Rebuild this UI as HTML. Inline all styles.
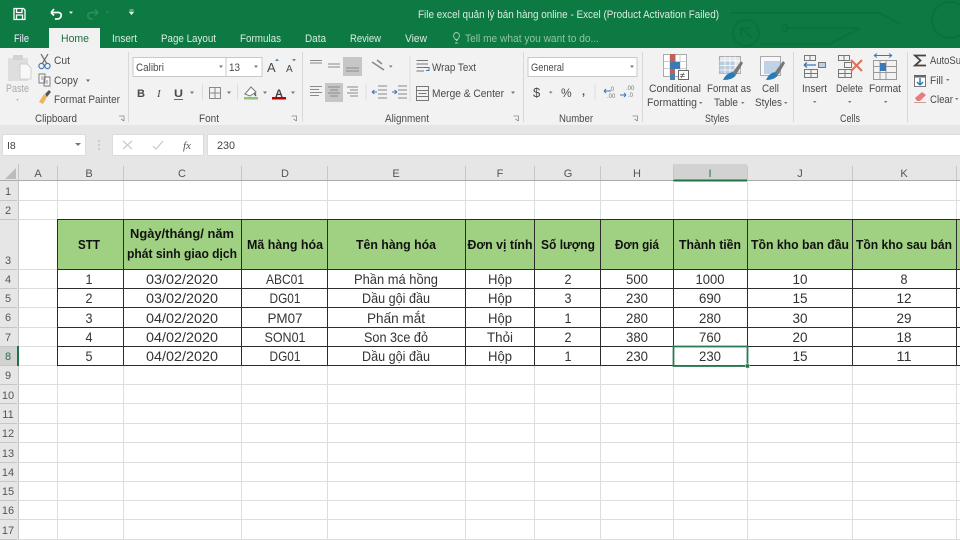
<!DOCTYPE html>
<html><head><meta charset="utf-8"><title>Excel</title>
<style>
html,body{margin:0;padding:0;background:#fff;width:960px;height:540px;overflow:hidden}
svg{display:block;font-family:"Liberation Sans","Noto Sans CJK SC",sans-serif;filter:blur(.3px)}
.r text{fill:#4a4a4a;font-size:11px}
.t text{fill:#dcebe2;font-size:11px}
.h text{fill:#555;font-size:11px;text-anchor:middle}
.b text{fill:#111;font-size:13px;font-weight:bold;text-anchor:middle}
.d text{fill:#333;font-size:14px;text-anchor:middle}
.ic{fill:none;stroke:#777;stroke-width:1}
</style></head><body>
<svg width="960" height="540" viewBox="0 0 960 540" xmlns="http://www.w3.org/2000/svg">
<rect width="960" height="540" fill="#fff"/>
<!-- title bar -->
<rect width="960" height="48" fill="#0d7a43"/>
<g fill="none" stroke="#0b723e" stroke-width="2">
<path d="M730 13H880L900 24"/><path d="M785 28H860L830 44H760"/><circle cx="746" cy="33" r="13"/><path d="M741 36V28H750M741 28L752 38"/><circle cx="785" cy="28" r="3"/><circle cx="950" cy="20" r="18"/>
</g>
<!-- QAT -->
<g fill="none" stroke="#fff" stroke-width="1.300"><path d="M14 8.500H23.500L25 10V19.500H14Z"/><path d="M16.500 9V12.500H22V9"/><path d="M16.500 19V15H22.500V19"/></g>
<path d="M51 12.500H59Q62 13.500 61 16.500T55 19M51 12.500L54 9M51 12.500L54 15.500" fill="none" stroke="#fff" stroke-width="1.700"/>
<path d="M69 11.500h4l-2 2.500z" fill="#e8f0eb"/>
<path d="M98 12.500H91Q87 13.500 88 16.500T93 19M98 12.500L95 9.500M98 12.500L95 15.500" fill="none" stroke="#2f8f5c" stroke-width="1.500"/>
<path d="M106 11.500h3l-1.500 2z" fill="#2f8f5c"/>
<path d="M129.500 10h4M129.500 12h4l-2 2.500z" stroke="#e8f0eb" stroke-width=".8" fill="#e8f0eb"/>
<g class="t">
<text x="418" y="18" textLength="301" lengthAdjust="spacingAndGlyphs">File excel quản lý bán hàng online - Excel (Product Activation Failed)</text>
<text x="14" y="42" textLength="15" lengthAdjust="spacingAndGlyphs" style="fill:#eef">File</text>
<text x="112" y="42" textLength="25" lengthAdjust="spacingAndGlyphs">Insert</text>
<text x="161" y="42" textLength="55" lengthAdjust="spacingAndGlyphs">Page Layout</text>
<text x="240" y="42" textLength="41" lengthAdjust="spacingAndGlyphs">Formulas</text>
<text x="305" y="42" textLength="21" lengthAdjust="spacingAndGlyphs">Data</text>
<text x="350" y="42" textLength="31" lengthAdjust="spacingAndGlyphs">Review</text>
<text x="405" y="42" textLength="22" lengthAdjust="spacingAndGlyphs">View</text>
<text x="465" y="42" textLength="134" lengthAdjust="spacingAndGlyphs" style="fill:#8fc4a6">Tell me what you want to do...</text>
</g>
<path d="M455 43h3M456 40.500h1.500M453.500 36a3 3.500 0 1 1 6 0c0 1.500-1.500 2-1.800 3.500h-2.400c-.3-1.500-1.800-2-1.800-3.500z" fill="none" stroke="#9fd0b3" stroke-width=".9"/>
<rect x="49" y="28" width="51" height="21" fill="#f1f1f1"/>
<text x="61" y="42" textLength="28" lengthAdjust="spacingAndGlyphs" font-size="11" fill="#1d6f42">Home</text>
<!-- ribbon -->
<rect y="48" width="960" height="77" fill="#f2f2f2"/>
<rect y="125" width="960" height="39" fill="#e6e6e6"/>
<g stroke="#d8d8d8"><path d="M128.500 52V122M302.500 52V122M523.500 52V122M642.500 52V122M793.500 52V122M907.500 52V122"/></g>
<!-- clipboard -->
<rect x="8" y="58" width="20" height="23" fill="#dedede"/><rect x="13" y="55" width="10" height="5" fill="#d2d2d2"/>
<path d="M20 64H27L31 68V79H20Z" fill="#f8f8f8" stroke="#cfcfcf"/>
<path d="M41 54L47 64M48 54L42 64" stroke="#666" stroke-width="1.200"/><circle cx="41.500" cy="66" r="2.600" fill="none" stroke="#3b78b5" stroke-width="1.200"/><circle cx="47.500" cy="66" r="2.600" fill="none" stroke="#3b78b5" stroke-width="1.200"/>
<path d="M39 74H45V83H39ZM44 77H50V86H44Z" fill="#f7f7f7" stroke="#777" stroke-width=".9"/>
<path d="M46 81h2M46 83h2M41 77h2M41 79h2" stroke="#777" stroke-width=".7"/>
<path d="M39 102L44 94L47 97L43 104Z" fill="#e9b65f"/><path d="M45 94L49 90L51 92L47 97Z" fill="#555"/>
<path d="M86 79.500h4l-2 2.500z" fill="#666"/>
<path d="M16 99h3l-1.500 2z" fill="#bbb"/>
<!-- boxes -->
<rect x="133" y="57.500" width="93" height="19" fill="#fff" stroke="#c9c9c9"/><rect x="226" y="57.500" width="36" height="19" fill="#fff" stroke="#c9c9c9"/>
<rect x="528" y="57.500" width="109" height="19" fill="#fff" stroke="#c9c9c9"/>
<g class="r">
<text x="6" y="92" textLength="23" lengthAdjust="spacingAndGlyphs" style="fill:#aaa">Paste</text>
<text x="54" y="64" textLength="16" lengthAdjust="spacingAndGlyphs">Cut</text>
<text x="54" y="84" textLength="24" lengthAdjust="spacingAndGlyphs">Copy</text>
<text x="54" y="103" textLength="66" lengthAdjust="spacingAndGlyphs">Format Painter</text>
<text x="35" y="122" textLength="42" lengthAdjust="spacingAndGlyphs">Clipboard</text>
<text x="199" y="122" textLength="20" lengthAdjust="spacingAndGlyphs">Font</text>
<text x="385" y="122" textLength="44" lengthAdjust="spacingAndGlyphs">Alignment</text>
<text x="559" y="122" textLength="34" lengthAdjust="spacingAndGlyphs">Number</text>
<text x="705" y="122" textLength="24" lengthAdjust="spacingAndGlyphs">Styles</text>
<text x="840" y="122" textLength="20" lengthAdjust="spacingAndGlyphs">Cells</text>
<text x="136" y="71" textLength="28" lengthAdjust="spacingAndGlyphs">Calibri</text>
<text x="229" y="71" textLength="11" lengthAdjust="spacingAndGlyphs">13</text>
<text x="531" y="71" textLength="33" lengthAdjust="spacingAndGlyphs">General</text>
<text x="432" y="71" textLength="44" lengthAdjust="spacingAndGlyphs">Wrap Text</text>
<text x="432" y="97" textLength="72" lengthAdjust="spacingAndGlyphs">Merge &amp; Center</text>
<text x="137" y="97" style="font-weight:bold" textLength="8" lengthAdjust="spacingAndGlyphs">B</text>
<text x="157" y="97" style="font-style:italic;font-family:'Liberation Serif',serif" textLength="5">I</text>
<text x="174" y="97" style="font-weight:bold" textLength="9" lengthAdjust="spacingAndGlyphs">U</text>
<text x="267" y="72" style="font-size:13px">A</text>
<text x="286" y="72" style="font-size:10px">A</text>
<text x="275" y="97" style="font-weight:bold;font-size:11px;fill:#444">A</text>
<text x="533" y="97" style="font-size:13px">$</text>
<text x="561" y="97" style="font-size:12px">%</text>
<text x="582" y="95" style="font-weight:bold;font-size:11px">,</text>
</g>
<g fill="none" stroke="#888" stroke-width=".8"><path d="M119 116h5v5M121 119l3 2M291.500 116h5v5M293.500 119l3 2M513.500 116h5v5M515.500 119l3 2M632.500 116h5v5M634.500 119l3 2"/></g>
<path d="M219 65.500h4l-2 2.500zM254 65.500h4l-2 2.500zM190 91.500h4l-2 2.500zM227 91.500h4l-2 2.500zM263 91.500h4l-2 2.500zM291 91.500h4l-2 2.500zM630 65.500h4l-2 2.500zM511 91.500h4l-2 2.500zM389 65.500h3.500l-1.750 2.200zM549 91.500h3.500l-1.750 2.200z" fill="#777"/>
<path d="M275 61l2-2.500 2 2.500zM292 59h4l-2 2.500z" fill="#5a8bb8"/>
<rect x="174" y="99" width="9" height="1" fill="#666"/>
<path d="M209.500 87.500H220.500V98.500H209.500ZM215 87.500V98.500M209.500 93H220.500" fill="none" stroke="#888"/>
<path d="M202.500 84V100M237.500 84V100" stroke="#ddd"/>
<path d="M245 94L251 87L256 92L250 96Z" fill="#fff" stroke="#777"/><path d="M255 92q2 3 1 4t-2-2" fill="#666"/><rect x="244" y="97" width="14" height="2.500" fill="#8cc47a"/>
<rect x="272" y="97" width="14" height="2.500" fill="#c00000"/>
<!-- alignment -->
<rect x="343" y="57" width="19" height="19" fill="#c6c6c6"/><rect x="325" y="83" width="18" height="19" fill="#c6c6c6"/>
<g stroke="#8a8a8a" stroke-width="1"><path d="M310 60.500h12M310 63h12M328 64h12M328 67h12M346 68h13M346 71h13M310 86.500h12M310 89.500h9M310 92.500h12M310 95.500h9M328 87h12M330 90h8M328 93h12M330 96h8M347 87h11M350 90h8M347 93h11M350 96h8"/></g>
<path d="M372 62L384 70M377 60l5 4" stroke="#888" stroke-width="1.500" fill="none"/>
<path d="M366 84V100M410 56V102" stroke="#ddd"/>
<g stroke="#888"><path d="M378 86h9M378 90h9M378 94h9M378 98h9M398 86h9M398 90h9M398 94h9M398 98h9" stroke-width=".9"/></g>
<path d="M372 92h5M372 92l2.500-2M372 92l2.500 2M392 92h5M397 92l-2.500-2M397 92l-2.500 2" stroke="#3b78b5" fill="none" stroke-width="1.100"/>
<path d="M416.500 60.500H428M416.500 64H428M416.500 67.500H424M416.500 71H424" stroke="#777"/><path d="M424 67.500h5v3h-3" fill="none" stroke="#3b78b5"/>
<path d="M416.500 86.500H428.500V100.500H416.500ZM416.500 90.500H428.500M416.500 96.500H428.500M418.500 93.500H426.500" fill="none" stroke="#777"/>
<!-- number -->
<path d="M595 84V100" stroke="#ddd"/>
<path d="M604 91h7M604 91l2-2M604 91l2 2" stroke="#3b78b5" fill="none"/>
<text x="609" y="91" font-size="6" fill="#777">.0</text><text x="607" y="98" font-size="6" fill="#777">.00</text>
<text x="626" y="90" font-size="6" fill="#777">.00</text><text x="628" y="97" font-size="6" fill="#777">.0</text>
<path d="M620 95h6M626 95l-2-2M626 95l-2 2" stroke="#3b78b5" fill="none"/>
<!-- styles -->
<rect x="663.500" y="54.500" width="23" height="22" fill="#fff" stroke="#aaa"/>
<path d="M663.500 61.500H686.500M663.500 68.500H686.500M670 54.500V76.500M680 54.500V76.500" stroke="#ccc"/>
<rect x="670" y="54" width="5.500" height="8" fill="#c0605a"/><rect x="670" y="62" width="10" height="7" fill="#3c7ab3"/><rect x="670" y="69" width="5" height="5" fill="#c0605a"/><rect x="670" y="74" width="5" height="6" fill="#4f7fa8"/>
<rect x="678.500" y="70.500" width="10" height="9" fill="#fff" stroke="#666"/><text x="680" y="78.500" font-size="9" fill="#333">≠</text>
<path d="M719.500 56.500H740.500V73.500H719.500Z" fill="#e4e8ee" stroke="#aaa"/><path d="M719.500 61H735V73.500H719.500Z" fill="#bccbdc"/>
<path d="M725 56.500V73.500M730 56.500V73.500M735 56.500V73.500M719.500 61H740.500M719.500 65.500H740.500M719.500 70H740.500" stroke="#fff" stroke-width=".7"/>
<path d="M723 80Q726 73 733 72L736 75Q733 80 723 80Z" fill="#2a7bb5"/><path d="M733 72L741 61L743 63L736 75Z" fill="#777"/>
<path d="M760.500 56.500H780.500V75.500H760.500Z" fill="#f8f8f8" stroke="#aaa"/><path d="M764 61H780V74H764Z" fill="#bfd2e6"/>
<path d="M766 80Q769 73 775 72L778 75Q775 80 766 80Z" fill="#2a7bb5"/><path d="M775 72L783 61L785 63L778 75Z" fill="#777"/>
<g class="r">
<text x="649" y="92" textLength="52" lengthAdjust="spacingAndGlyphs">Conditional</text>
<text x="647" y="106" textLength="50" lengthAdjust="spacingAndGlyphs">Formatting</text>
<text x="707" y="92" textLength="44" lengthAdjust="spacingAndGlyphs">Format as</text>
<text x="714" y="106" textLength="24" lengthAdjust="spacingAndGlyphs">Table</text>
<text x="762" y="92" textLength="17" lengthAdjust="spacingAndGlyphs">Cell</text>
<text x="755" y="106" textLength="27" lengthAdjust="spacingAndGlyphs">Styles</text>
<text x="802" y="92" textLength="25" lengthAdjust="spacingAndGlyphs">Insert</text>
<text x="836" y="92" textLength="27" lengthAdjust="spacingAndGlyphs">Delete</text>
<text x="869" y="92" textLength="32" lengthAdjust="spacingAndGlyphs">Format</text>
<text x="930" y="64" textLength="31" lengthAdjust="spacingAndGlyphs">AutoSu</text>
<text x="930" y="84" textLength="13" lengthAdjust="spacingAndGlyphs">Fill</text>
<text x="930" y="103" textLength="23" lengthAdjust="spacingAndGlyphs">Clear</text>
</g>
<path d="M699 102h3.500l-1.750 2zM741 102h3.500l-1.750 2zM784 102h3.500l-1.750 2zM813 101h3.500l-1.750 2zM848 101h3.500l-1.750 2zM884 101h3.500l-1.750 2zM946 79h3.500l-1.750 2zM955 98h3.500l-1.750 2z" fill="#777"/>
<!-- cells -->
<g class="ic">
<path d="M804.500 55.500H815.500V60.500H804.500ZM810 55.500V60.500M804.500 69.500H817.500V77.500H804.500ZM811 69.500V77.500M804.500 73.500H817.500"/>
<path d="M818.500 62.500H825.500V67.500H818.500Z" fill="#bcd0e6"/>
<path d="M838.500 55.500H849.500V60.500H838.500ZM844 55.500V60.500M838.500 69.500H851.500V77.500H838.500ZM845 69.500V77.500M838.500 73.500H851.500"/>
<path d="M844.500 62.500H851.500V67.500H844.500Z"/>
<path d="M873.500 60.500H896.500V79.500H873.500ZM880 60.500V79.500M886 60.500V79.500M873.500 66.500H896.500M873.500 72.500H896.500" stroke="#999"/>
</g>
<path d="M804 65H816M804 65l3-2.500M804 65l3 2.500" stroke="#3b78b5" fill="none" stroke-width="1.300"/>
<path d="M851 60L862 71M862 60L851 71" stroke="#e0705a" stroke-width="2"/>
<rect x="880" y="63" width="6" height="8" fill="#3b78b5"/>
<path d="M874 55.500H892M874 55.500l3-2M874 55.500l3 2M892 55.500l-3-2M892 55.500l-3 2" stroke="#3b78b5" fill="none"/>
<!-- editing -->
<path d="M926 55.500H915L920.500 60.500L915 65.500H926" fill="none" stroke="#444" stroke-width="1.800"/>
<rect x="914.500" y="75.500" width="11" height="11" fill="#fff" stroke="#777"/><rect x="914" y="75" width="12" height="2.500" fill="#666"/><path d="M920 78V85M920 85l-3-3M920 85l3-3" stroke="#2a7bb5" fill="none" stroke-width="1.500"/>
<path d="M915 98L922 92L926 95L920 101H917Z" fill="#e87a80"/><path d="M914 102.500H926" stroke="#c9a0a0"/>
<!-- formula bar -->
<rect x="2.500" y="134.500" width="83" height="21" fill="#fff" stroke="#dcdcdc"/>
<text x="7" y="149" font-size="10.500" fill="#444">I8</text>
<path d="M75 143h6l-3 3z" fill="#777"/>
<circle cx="99" cy="141" r=".8" fill="#aaa"/><circle cx="99" cy="145" r=".8" fill="#aaa"/><circle cx="99" cy="149" r=".8" fill="#aaa"/>
<rect x="112.500" y="134.500" width="91" height="21" fill="#fff" stroke="#dcdcdc"/>
<rect x="207.500" y="134.500" width="760" height="21" fill="#fff" stroke="#dcdcdc"/>
<path d="M123 141L132 149M132 141L123 149M153 146L156 149L163 141" fill="none" stroke="#c9c9c9" stroke-width="1.200"/>
<text x="183" y="149" font-size="11" fill="#555" font-style="italic" font-family="Liberation Serif,serif">fx</text>
<text x="217" y="149" font-size="11" fill="#444" textLength="18" lengthAdjust="spacingAndGlyphs">230</text>
<!-- headers -->
<rect y="164" width="960" height="17" fill="#e6e6e6"/>
<rect y="164" width="19" height="376" fill="#e6e6e6"/>
<path d="M16 168V179H5Z" fill="#bcbcbc"/>
<rect x="673" y="164" width="74" height="17" fill="#d2d2d2"/>
<rect y="346" width="19" height="20" fill="#d2d2d2"/>
<path d="M0 180.500H960" stroke="#ababab"/><path d="M18.500 164V540" stroke="#c4c4c4"/>
<rect x="673" y="179.500" width="74" height="2" fill="#217346"/>
<rect x="17" y="346" width="2" height="20" fill="#217346"/>
<g stroke="#c6c6c6"><path d="M57.500 166V180M123.500 166V180M241.500 166V180M327.500 166V180M465.500 166V180M534.500 166V180M600.500 166V180M673.500 166V180M747.500 166V180M852.500 166V180M956.500 166V180"/>
<path d="M0 200.500H17M0 219.500H17M0 269.500H17M0 288.500H17M0 307.500H17M0 327.500H17M0 346.500H17M0 365.500H17M0 384.500H17M0 403.500H17M0 423.500H17M0 442.500H17M0 462.500H17M0 481.500H17M0 500.500H17M0 519.500H17M0 539.500H17"/></g>
<g class="h">
<text x="38" y="177">A</text><text x="89" y="177">B</text><text x="182" y="177">C</text><text x="285" y="177">D</text><text x="396" y="177">E</text><text x="500" y="177">F</text><text x="568" y="177">G</text><text x="637" y="177">H</text><text x="710" y="177" style="fill:#217346">I</text><text x="800" y="177">J</text><text x="904" y="177">K</text>
<text x="8" y="195">1</text><text x="8" y="214">2</text><text x="8" y="264">3</text><text x="8" y="283">4</text><text x="8" y="302">5</text><text x="8" y="321">6</text><text x="8" y="341">7</text><text x="8" y="360" style="fill:#217346">8</text><text x="8" y="379">9</text><text x="8" y="399">10</text><text x="8" y="418">11</text><text x="8" y="437">12</text><text x="8" y="457">13</text><text x="8" y="476">14</text><text x="8" y="495">15</text><text x="8" y="514">16</text><text x="8" y="534">17</text>
</g>
<!-- grid -->
<g stroke="#dedede">
<path d="M19 200.500H960M19 219.500H960M19 384.500H960M19 403.500H960M19 423.500H960M19 442.500H960M19 462.500H960M19 481.500H960M19 500.500H960M19 519.500H960M19 539.500H960"/>
<path d="M19 269.500H57M19 288.500H57M19 307.500H57M19 327.500H57M19 346.500H57M19 365.500H57"/>
<path d="M57.500 181V540M123.500 181V219M123.500 366V540M241.500 181V219M241.500 366V540M327.500 181V219M327.500 366V540M465.500 181V219M465.500 366V540M534.500 181V219M534.500 366V540M600.500 181V219M600.500 366V540M673.500 181V219M673.500 366V540M747.500 181V219M747.500 366V540M852.500 181V219M852.500 366V540M956.500 181V219M956.500 366V540"/>
</g>
<!-- table -->
<rect x="57" y="219" width="903" height="50" fill="#a0d082"/>
<g stroke="#2c2c2c" stroke-width="1">
<path d="M57 219.500H960M57 269.500H960M57 288.500H960M57 307.500H960M57 327.500H960M57 346.500H960M57 365.500H960"/>
<path d="M57.500 219V366M123.500 219V366M241.500 219V366M327.500 219V366M465.500 219V366M534.500 219V366M600.500 219V366M673.500 219V366M747.500 219V366M852.500 219V366M956.500 219V366"/>
</g>
<g class="b">
<text x="89" y="249" textLength="22" lengthAdjust="spacingAndGlyphs">STT</text>
<text x="182" y="238" textLength="104" lengthAdjust="spacingAndGlyphs">Ngày/tháng/ năm</text>
<text x="182" y="258" textLength="110" lengthAdjust="spacingAndGlyphs">phát sinh giao dịch</text>
<text x="285" y="249" textLength="76" lengthAdjust="spacingAndGlyphs">Mã hàng hóa</text>
<text x="396" y="249" textLength="80" lengthAdjust="spacingAndGlyphs">Tên hàng hóa</text>
<text x="500" y="249" textLength="65" lengthAdjust="spacingAndGlyphs">Đơn vị tính</text>
<text x="568" y="249" textLength="54" lengthAdjust="spacingAndGlyphs">Số lượng</text>
<text x="637" y="249" textLength="44" lengthAdjust="spacingAndGlyphs">Đơn giá</text>
<text x="710" y="249" textLength="62" lengthAdjust="spacingAndGlyphs">Thành tiền</text>
<text x="800" y="249" textLength="98" lengthAdjust="spacingAndGlyphs">Tồn kho ban đầu</text>
<text x="904" y="249" textLength="96" lengthAdjust="spacingAndGlyphs">Tồn kho sau bán</text>
</g>
<g class="d">
<text x="89" y="284" textLength="7" lengthAdjust="spacingAndGlyphs">1</text><text x="182" y="284" textLength="72" lengthAdjust="spacingAndGlyphs">03/02/2020</text><text x="285" y="284" textLength="38" lengthAdjust="spacingAndGlyphs">ABC01</text><text x="396" y="284" textLength="84" lengthAdjust="spacingAndGlyphs">Phần má hồng</text><text x="500" y="284" textLength="24" lengthAdjust="spacingAndGlyphs">Hộp</text><text x="568" y="284" textLength="7" lengthAdjust="spacingAndGlyphs">2</text><text x="637" y="284" textLength="22" lengthAdjust="spacingAndGlyphs">500</text><text x="710" y="284" textLength="29" lengthAdjust="spacingAndGlyphs">1000</text><text x="800" y="284" textLength="15" lengthAdjust="spacingAndGlyphs">10</text><text x="904" y="284" textLength="7" lengthAdjust="spacingAndGlyphs">8</text>
<text x="89" y="303" textLength="7" lengthAdjust="spacingAndGlyphs">2</text><text x="182" y="303" textLength="72" lengthAdjust="spacingAndGlyphs">03/02/2020</text><text x="285" y="303" textLength="31" lengthAdjust="spacingAndGlyphs">DG01</text><text x="396" y="303" textLength="68" lengthAdjust="spacingAndGlyphs">Dầu gội đầu</text><text x="500" y="303" textLength="24" lengthAdjust="spacingAndGlyphs">Hộp</text><text x="568" y="303" textLength="7" lengthAdjust="spacingAndGlyphs">3</text><text x="637" y="303" textLength="22" lengthAdjust="spacingAndGlyphs">230</text><text x="710" y="303" textLength="22" lengthAdjust="spacingAndGlyphs">690</text><text x="800" y="303" textLength="15" lengthAdjust="spacingAndGlyphs">15</text><text x="904" y="303" textLength="15" lengthAdjust="spacingAndGlyphs">12</text>
<text x="89" y="323" textLength="7" lengthAdjust="spacingAndGlyphs">3</text><text x="182" y="323" textLength="72" lengthAdjust="spacingAndGlyphs">04/02/2020</text><text x="285" y="323" textLength="35" lengthAdjust="spacingAndGlyphs">PM07</text><text x="396" y="323" textLength="58" lengthAdjust="spacingAndGlyphs">Phấn mắt</text><text x="500" y="323" textLength="24" lengthAdjust="spacingAndGlyphs">Hộp</text><text x="568" y="323" textLength="7" lengthAdjust="spacingAndGlyphs">1</text><text x="637" y="323" textLength="22" lengthAdjust="spacingAndGlyphs">280</text><text x="710" y="323" textLength="22" lengthAdjust="spacingAndGlyphs">280</text><text x="800" y="323" textLength="15" lengthAdjust="spacingAndGlyphs">30</text><text x="904" y="323" textLength="15" lengthAdjust="spacingAndGlyphs">29</text>
<text x="89" y="342" textLength="7" lengthAdjust="spacingAndGlyphs">4</text><text x="182" y="342" textLength="72" lengthAdjust="spacingAndGlyphs">04/02/2020</text><text x="285" y="342" textLength="41" lengthAdjust="spacingAndGlyphs">SON01</text><text x="396" y="342" textLength="64" lengthAdjust="spacingAndGlyphs">Son 3ce đỏ</text><text x="500" y="342" textLength="26" lengthAdjust="spacingAndGlyphs">Thỏi</text><text x="568" y="342" textLength="7" lengthAdjust="spacingAndGlyphs">2</text><text x="637" y="342" textLength="22" lengthAdjust="spacingAndGlyphs">380</text><text x="710" y="342" textLength="22" lengthAdjust="spacingAndGlyphs">760</text><text x="800" y="342" textLength="15" lengthAdjust="spacingAndGlyphs">20</text><text x="904" y="342" textLength="15" lengthAdjust="spacingAndGlyphs">18</text>
<text x="89" y="361" textLength="7" lengthAdjust="spacingAndGlyphs">5</text><text x="182" y="361" textLength="72" lengthAdjust="spacingAndGlyphs">04/02/2020</text><text x="285" y="361" textLength="31" lengthAdjust="spacingAndGlyphs">DG01</text><text x="396" y="361" textLength="68" lengthAdjust="spacingAndGlyphs">Dầu gội đầu</text><text x="500" y="361" textLength="24" lengthAdjust="spacingAndGlyphs">Hộp</text><text x="568" y="361" textLength="7" lengthAdjust="spacingAndGlyphs">1</text><text x="637" y="361" textLength="22" lengthAdjust="spacingAndGlyphs">230</text><text x="710" y="361" textLength="22" lengthAdjust="spacingAndGlyphs">230</text><text x="800" y="361" textLength="15" lengthAdjust="spacingAndGlyphs">15</text><text x="904" y="361" textLength="15" lengthAdjust="spacingAndGlyphs">11</text>
</g>
<!-- selection -->
<rect x="673.500" y="346.500" width="74" height="19.500" fill="none" stroke="#2b7a55" stroke-width="1.800"/>
<rect x="745.500" y="364" width="4" height="4" fill="#217346" stroke="#fff" stroke-width=".5"/>
</svg>
</body></html>
